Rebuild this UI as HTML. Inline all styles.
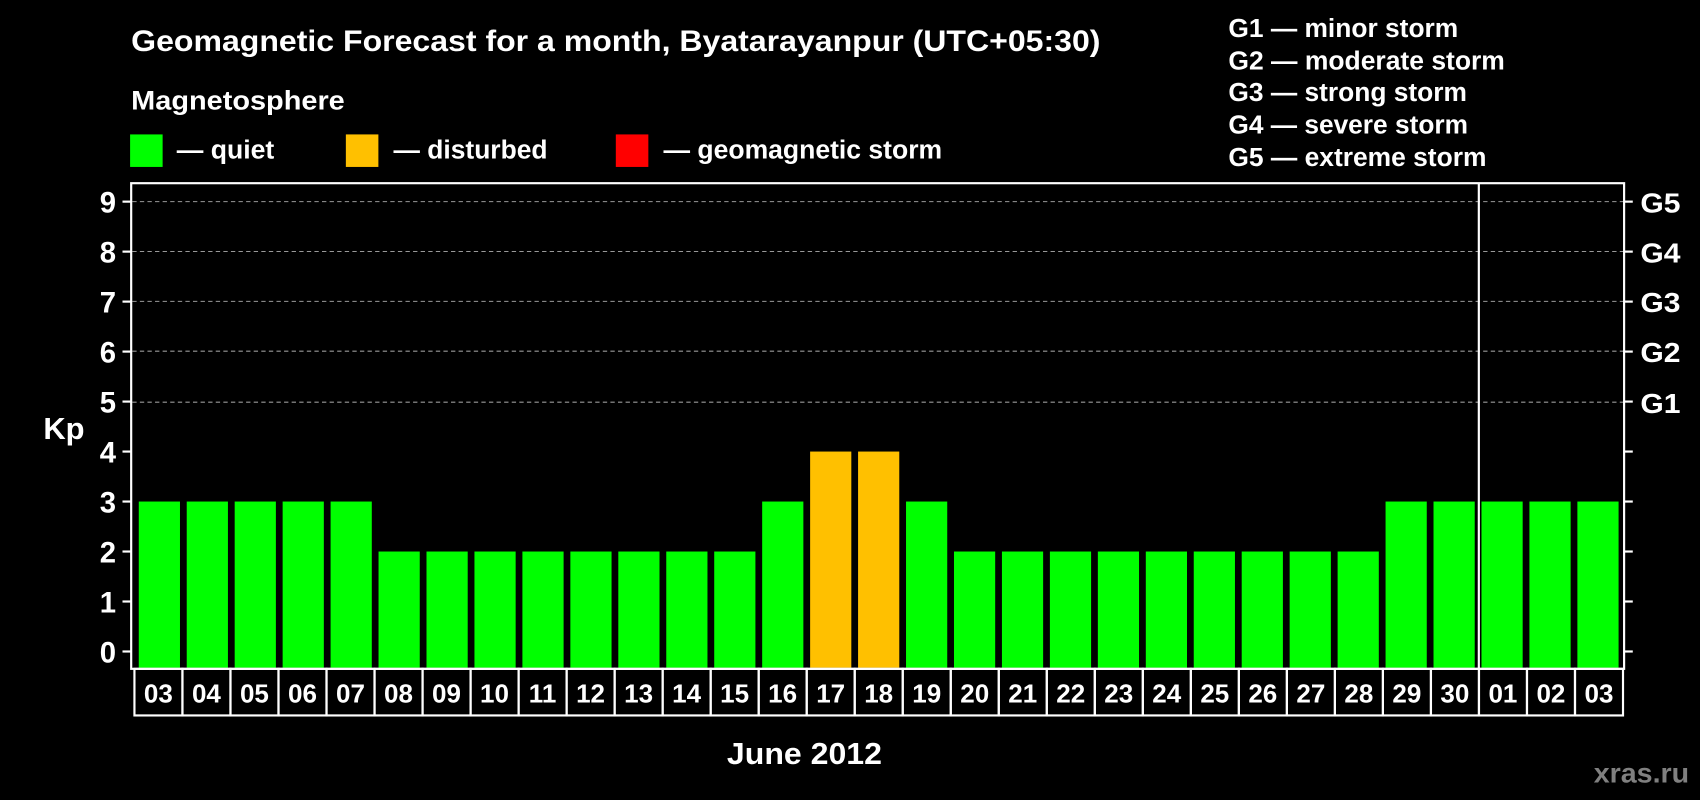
<!DOCTYPE html>
<html><head><meta charset="utf-8"><style>
html,body{margin:0;padding:0;background:#000;width:1700px;height:800px;overflow:hidden}
svg{display:block}
text{font-family:"Liberation Sans",Arial,sans-serif;font-weight:bold;fill:#fff}
</style></head><body>
<svg width="1700" height="800" viewBox="0 0 1568 738" preserveAspectRatio="none">
<rect width="1568" height="738" fill="#000"/>
<text x="121" y="47" font-size="27" textLength="894" lengthAdjust="spacingAndGlyphs">Geomagnetic Forecast for a month, Byatarayanpur (UTC+05:30)</text>
<text x="121" y="101" font-size="25" textLength="197" lengthAdjust="spacingAndGlyphs">Magnetosphere</text>
<rect x="120" y="124" width="30" height="30" fill="#00ff00"/>
<rect x="319" y="124" width="30" height="30" fill="#ffc000"/>
<rect x="568" y="124" width="30" height="30" fill="#ff0000"/>
<text x="163" y="146" font-size="24" textLength="90" lengthAdjust="spacingAndGlyphs">— quiet</text>
<text x="363" y="146" font-size="24" textLength="142" lengthAdjust="spacingAndGlyphs">— disturbed</text>
<text x="612" y="146" font-size="24" textLength="257" lengthAdjust="spacingAndGlyphs">— geomagnetic storm</text>
<g font-size="24">
<text x="1133" y="34" textLength="212" lengthAdjust="spacingAndGlyphs">G1 — minor storm</text>
<text x="1133" y="64" textLength="255" lengthAdjust="spacingAndGlyphs">G2 — moderate storm</text>
<text x="1133" y="93" textLength="220" lengthAdjust="spacingAndGlyphs">G3 — strong storm</text>
<text x="1133" y="123" textLength="221" lengthAdjust="spacingAndGlyphs">G4 — severe storm</text>
<text x="1133" y="153" textLength="238" lengthAdjust="spacingAndGlyphs">G5 — extreme storm</text>
</g>
<g stroke="#999" stroke-width="1" stroke-dasharray="4,3">
<line x1="122" y1="186" x2="1498" y2="186"/>
<line x1="122" y1="232" x2="1498" y2="232"/>
<line x1="122" y1="278" x2="1498" y2="278"/>
<line x1="122" y1="324" x2="1498" y2="324"/>
<line x1="122" y1="371" x2="1498" y2="371"/>
</g>
<g id="bars"></g>
<g stroke="#fff" stroke-width="2" fill="none">
<rect x="121" y="169" width="1377" height="448"/>
<line x1="1364" y1="169" x2="1364" y2="617"/>
</g>
<g stroke="#fff" stroke-width="2" id="ticks"></g>
<g font-size="27" text-anchor="end" id="ylab"></g>
<g font-size="26">
<text x="1513" y="196" textLength="37" lengthAdjust="spacingAndGlyphs">G5</text>
<text x="1513" y="242" textLength="37" lengthAdjust="spacingAndGlyphs">G4</text>
<text x="1513" y="288" textLength="37" lengthAdjust="spacingAndGlyphs">G3</text>
<text x="1513" y="334" textLength="37" lengthAdjust="spacingAndGlyphs">G2</text>
<text x="1513" y="381" textLength="37" lengthAdjust="spacingAndGlyphs">G1</text>
</g>
<text x="40" y="405" font-size="28" textLength="38" lengthAdjust="spacingAndGlyphs">Kp</text>
<g id="dates" font-size="24" text-anchor="middle"></g>
<text x="742" y="705" font-size="28" text-anchor="middle" textLength="143" lengthAdjust="spacingAndGlyphs">June 2012</text>
<text x="1470" y="722" font-size="26" style="fill:#808080" textLength="88" lengthAdjust="spacingAndGlyphs">xras.ru</text>
</svg>
<script>
var ns="http://www.w3.org/2000/svg";
function el(p,t,a,txt){var e=document.createElementNS(ns,t);for(var k in a)e.setAttribute(k,a[k]);if(txt!=null)e.textContent=txt;document.getElementById(p).appendChild(e);}
var vals=[3,3,3,3,3,2,2,2,2,2,2,2,2,3,4,4,3,2,2,2,2,2,2,2,2,2,3,3,3,3,3];
var days=["03","04","05","06","07","08","09","10","11","12","13","14","15","16","17","18","19","20","21","22","23","24","25","26","27","28","29","30","01","02","03"];
function Y(k){return 601-k*46.11;}
for(var i=0;i<31;i++){
 var x=128+i*44.23,v=vals[i];
 el("bars","rect",{x:x,y:Y(v),width:38,height:616-Y(v),fill:v>=4?"#ffc000":"#00ff00"});
 var cx=124+i*44.29;
 el("dates","rect",{x:cx,y:617,width:44.29,height:43,fill:"none",stroke:"#fff","stroke-width":2});
 el("dates","text",{x:cx+22.1,y:648},days[i]);
}
for(var k=0;k<=9;k++){
 var y=Y(k);
 el("ticks","line",{x1:113,y1:y,x2:121,y2:y});
 el("ticks","line",{x1:1498,y1:y,x2:1506,y2:y});
 el("ylab","text",{x:107,y:y+10},String(k));
}
</script>
</body></html>
